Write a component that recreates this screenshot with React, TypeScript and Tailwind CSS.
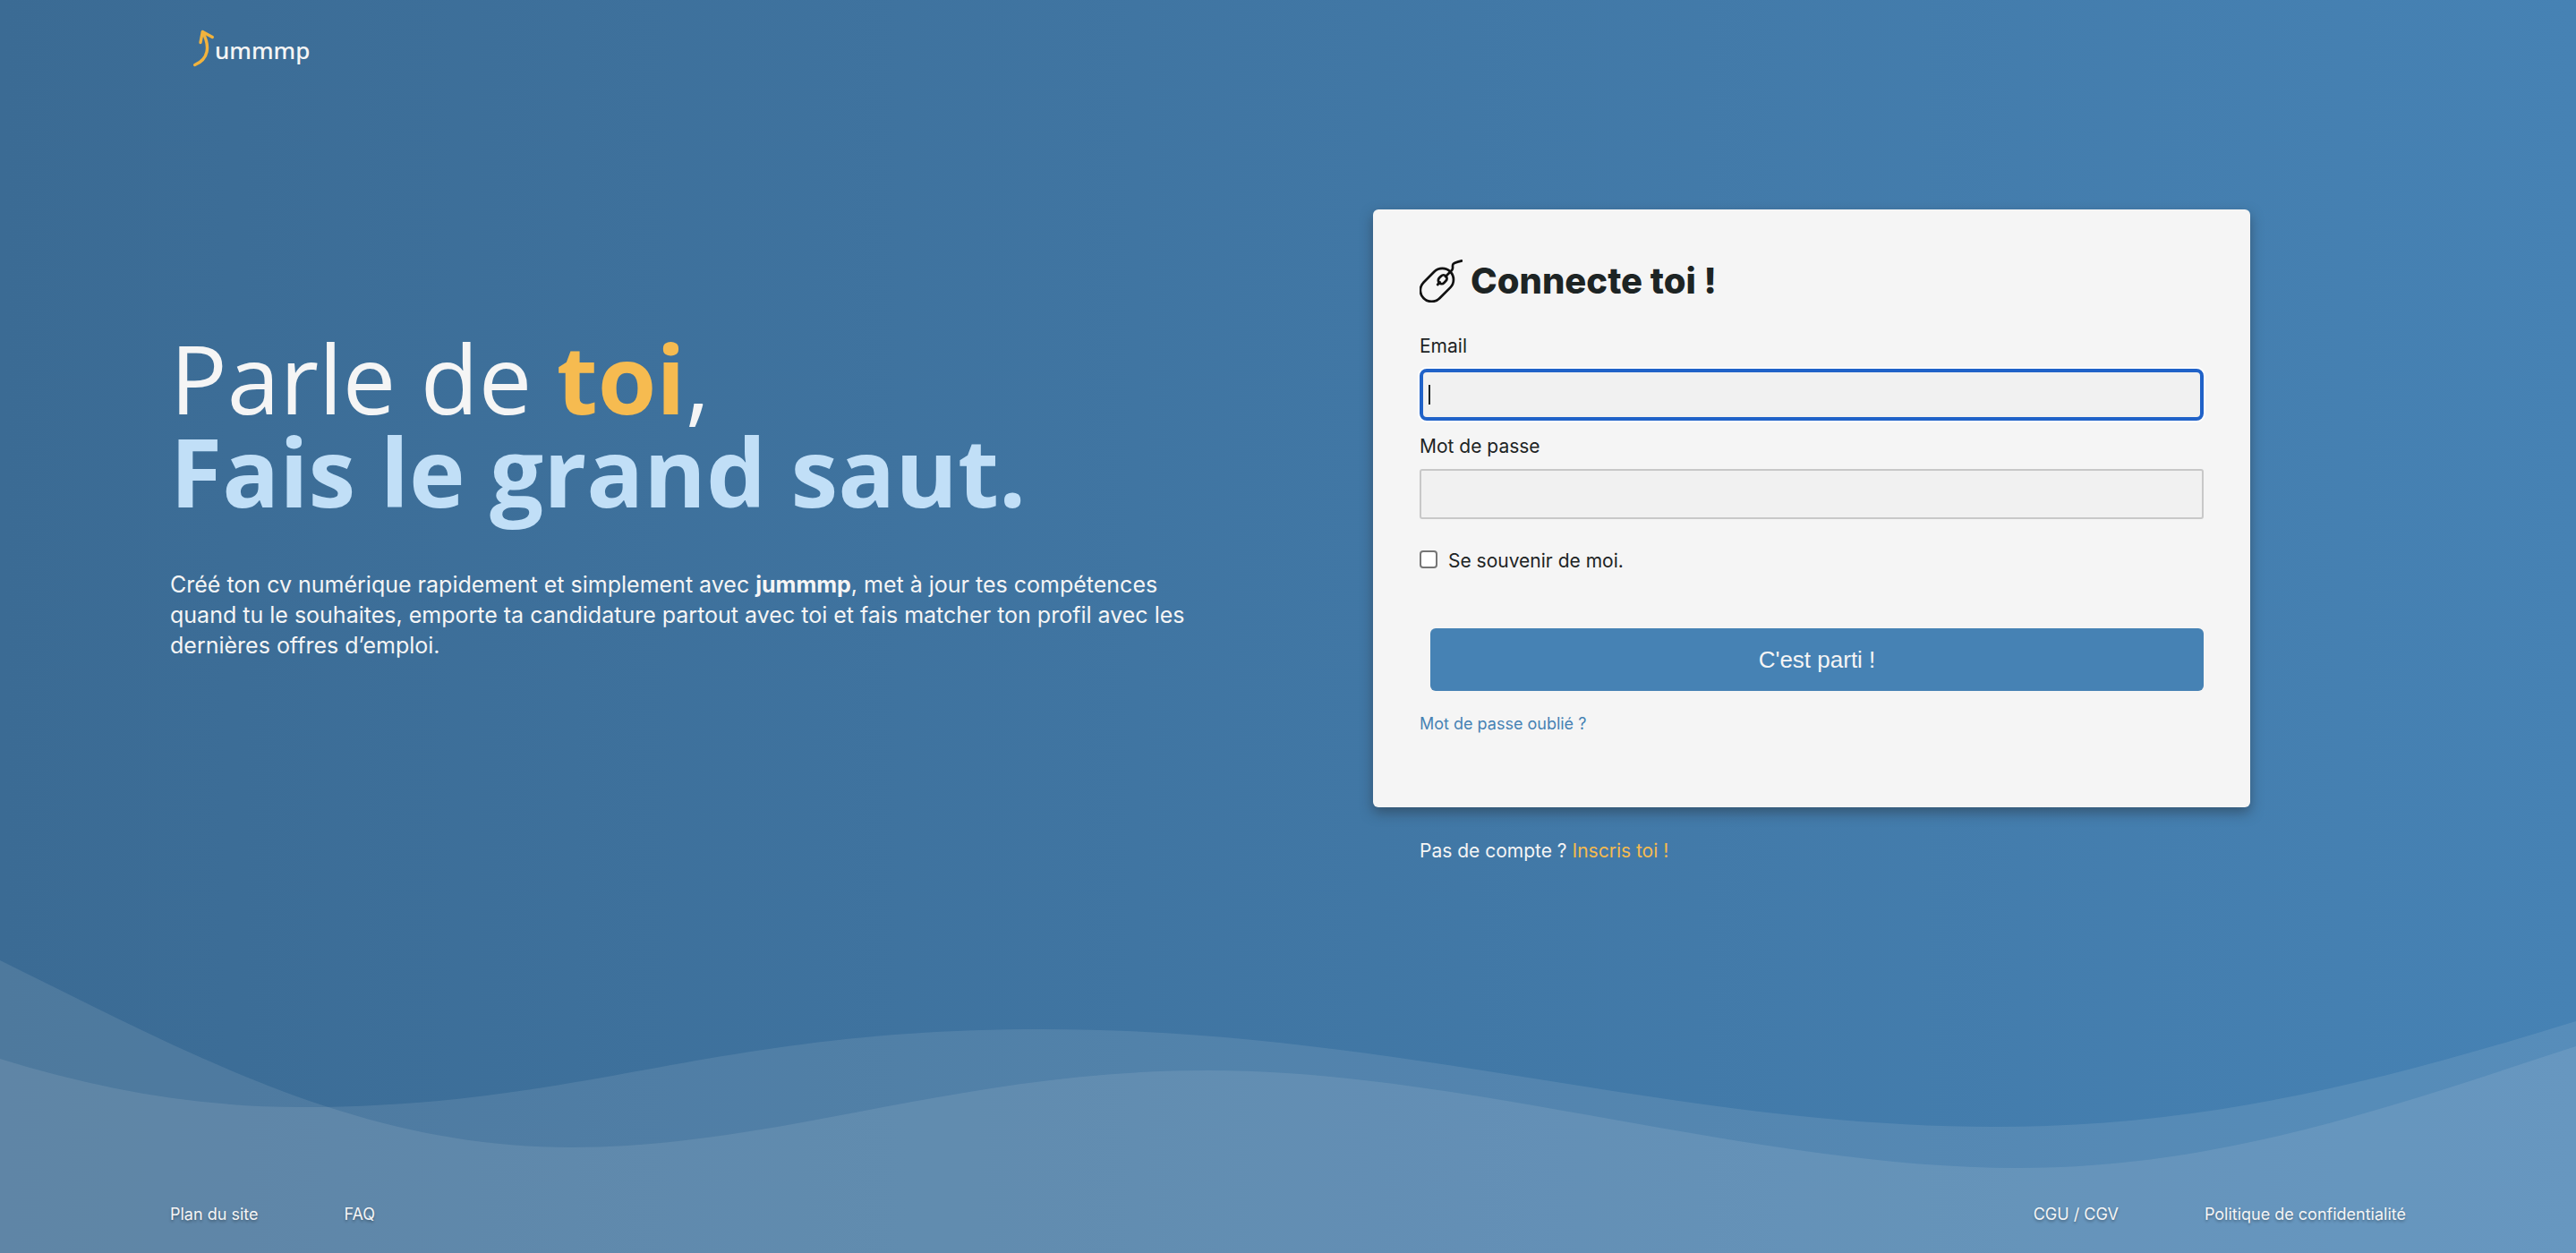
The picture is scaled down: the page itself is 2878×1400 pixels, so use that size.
const body = "font-['Inter',sans-serif]";

function Logo() {
  return (
    <a href="#" aria-label="jummmp" className="flex items-start text-[#f5f5f5]">
      <svg viewBox="0 0 24 42" className="h-[42px] w-6" fill="none" stroke="#f2b33d" strokeWidth="3.4" strokeLinecap="round" strokeLinejoin="round">
        <path d="M1.7 39.5C17 33 19 19 10.5 3" />
        <path d="M8 14.5L10.3 2.5L21.3 8.5" />
      </svg>
      <span className="pt-[7px] font-['Noto_Sans',sans-serif] text-[26px] leading-8 font-medium">ummmp</span>
    </a>
  );
}

function MouseIcon() {
  return (
    <svg viewBox="0 0 48 48" className="size-12" fill="none" stroke="#111" strokeWidth="2.7" strokeLinecap="round" aria-hidden="true">
      <rect x="-1.6" y="15.8" width="42" height="25.2" rx="12.6" transform="rotate(-45 19.4 28.4)" />
      <rect x="20.4" y="18.4" width="10.6" height="7.6" rx="3.8" transform="rotate(-45 25.7 22.2)" />
      <path d="M20.2 28L22.6 25.2M29 19L36 12C38.5 9.5 35.5 6.5 38 4.5C40 2.9 43.5 2.6 47 1.4" />
    </svg>
  );
}

function Waves() {
  return (
    <svg viewBox="0 0 2878 400" preserveAspectRatio="none" className="pointer-events-none absolute inset-x-0 bottom-0 h-[400px] w-full" fill="#f5f5f5" fillOpacity="0.1" aria-hidden="true">
      <path d="M0 73C213 178 400 282 638 282C870 282 1070 196 1350 196C1640 196 1960 305 2255 305C2480 305 2670 237 2878 169V400H0Z" />
      <path d="M0 183C110 217 220 237 335 237C660 237 790 150 1165 150C1560 150 1870 259 2228 259C2450 259 2640 215 2878 141V400H0Z" />
    </svg>
  );
}

function LoginCard() {
  return (
    <form className="rounded-md bg-[#f5f5f5] px-[52px] pt-14 pb-[78px] text-[21px] leading-[30px] text-[#1d2424] shadow-[0_6px_14px_rgba(40,50,60,0.5)]">
      <h2 className="flex items-center gap-[9px] text-[40px] leading-[48px] font-extrabold">
        <MouseIcon />
        Connecte toi !
      </h2>

      <label htmlFor="email" className="mt-[34px] block">Email</label>
      <div className="relative mt-2.5">
        <input id="email" type="email" className="block h-[58px] w-full rounded-lg border-4 border-[#2062c8] bg-[#f1f1f1] px-1.5 caret-transparent ring-2 ring-white outline-none" />
        <span className="absolute top-[18px] left-2.5 h-[22px] w-0.5 bg-[#1d2424]" />
      </div>

      <label htmlFor="password" className="mt-3.5 block">Mot de passe</label>
      <input id="password" type="password" className="mt-2.5 block h-14 w-full rounded-[3px] border-2 border-[#c8c8c8] bg-[#f1f1f1] px-2 outline-none" />

      <div className="mt-8 flex items-start gap-3">
        <input id="remember" type="checkbox" className="mt-[3px] size-5 appearance-none rounded border-2 border-[#767676] bg-white" />
        <label htmlFor="remember">Se souvenir de moi.</label>
      </div>

      <div className="mt-[60px] pl-3">
        <button type="button" className="block h-[70px] w-full rounded-md bg-[#4682b4] font-['Liberation_Sans',sans-serif] text-[26px] text-[#f5f5f5]">C'est parti !</button>
      </div>

      <a href="#" className="mt-[22px] block w-fit text-lg leading-[30px] text-[#4682b4]">Mot de passe oublié ?</a>
    </form>
  );
}

export default function App() {
  return (
    <div className={`relative flex min-h-screen flex-col bg-linear-to-r from-[#3b6b94] to-[#4682b4] text-[#f5f5f5] ${body}`}>
      <Waves />

      <header className="relative h-[104px] px-[216px] pt-[33px]">
        <Logo />
      </header>

      <main className="relative grid flex-1 grid-cols-2 items-start gap-[190px] px-[190px] pt-[130px]">
        <section className="pt-[136px]">
          <h1 className="font-['Open_Sans',sans-serif] text-[106px] leading-[104px] font-normal whitespace-nowrap">
            Parle de <strong className="font-bold text-[#f6bb50]">toi</strong>,
            <br />
            <strong className="font-bold text-[#c1dff7]">Fais le grand saut.</strong>
          </h1>
          <p className="mt-[58px] text-[25px] leading-[34px]">
            Créé ton cv numérique rapidement et simplement avec <strong className="font-bold">jummmp</strong>, met à jour tes compétences quand tu le souhaites, emporte ta candidature partout avec toi et fais matcher ton profil avec les dernières offres d’emploi.
          </p>
        </section>

        <section className="max-w-[980px]">
          <LoginCard />
          <p className="mt-[34px] px-[52px] text-[21px] leading-[30px]">
            Pas de compte ? <a href="#" className="text-[#f6bb50]">Inscris toi !</a>
          </p>
        </section>
      </main>

      <footer className="relative flex justify-between px-[190px] pb-7 text-lg leading-[30px] text-shadow-[0_2px_3px_rgba(0,0,0,0.3)]">
        <nav className="flex gap-24">
          <a href="#">Plan du site</a>
          <a href="#">FAQ</a>
        </nav>
        <nav className="flex gap-24">
          <a href="#">CGU / CGV</a>
          <a href="#">Politique de confidentialité</a>
        </nav>
      </footer>
    </div>
  );
}
